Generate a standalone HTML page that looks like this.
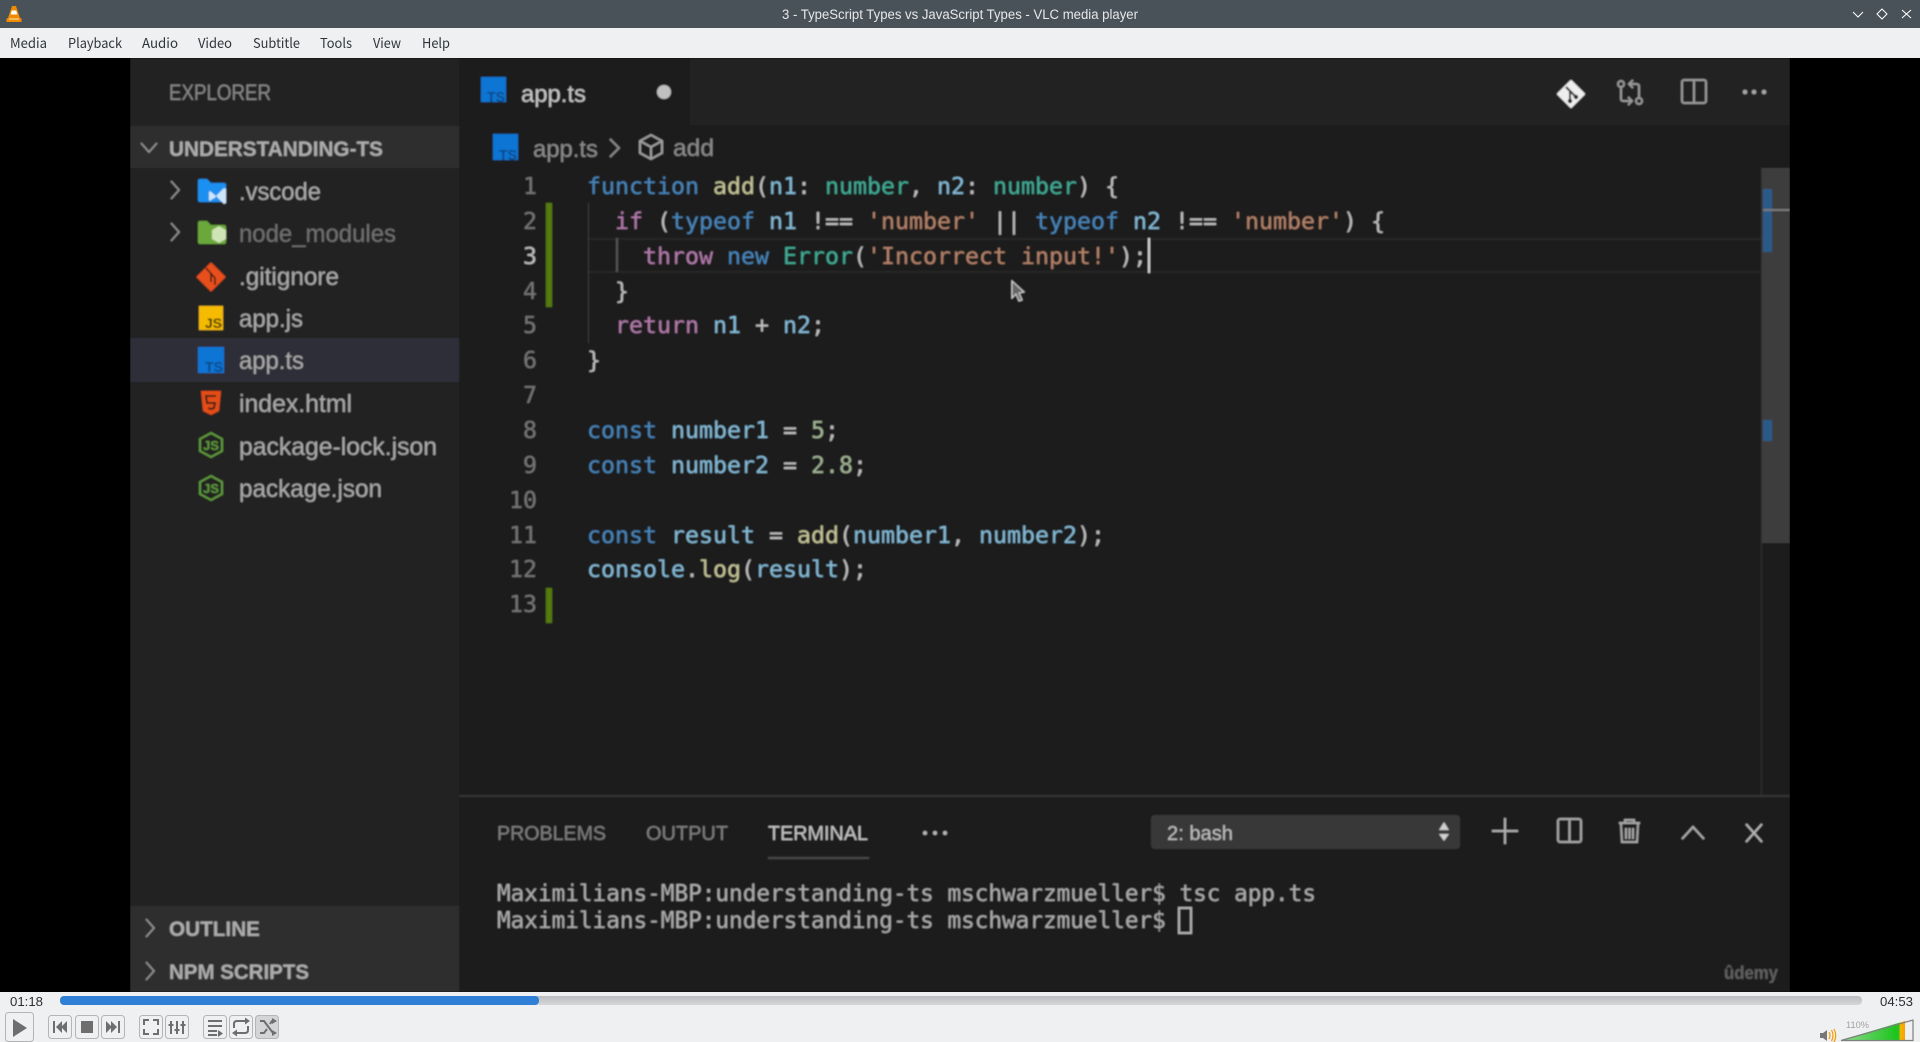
<!DOCTYPE html>
<html><head><meta charset="utf-8"><title>3 - TypeScript Types vs JavaScript Types - VLC media player</title>
<style>
html,body{margin:0;padding:0;background:#000;width:1920px;height:1042px;overflow:hidden}
svg{display:block}
text{font-family:"Liberation Sans",sans-serif}
.m{font-family:"DejaVu Sans Mono","Liberation Mono",monospace;font-size:23.25px}
.t{font-family:"DejaVu Sans Mono","Liberation Mono",monospace;font-size:22.68px;fill:#adadad}
.ln{fill:#767676;text-anchor:end}
.p{fill:#c0c0c0}.k{fill:#4a86ba}.c{fill:#b27cab}.f{fill:#c6c69a}.v{fill:#86bcd8}.y{fill:#42ad97}.s{fill:#b5836b}.n{fill:#a2b596}
.fn{font-size:24.7px;fill:#ababab}
.h{font-size:21px;font-weight:bold;fill:#adadad}
.menu{font-family:"Noto Sans CJK SC","Liberation Sans",sans-serif;font-size:13.5px;fill:#2f3338}
.btn{fill:#eff0f1;stroke:#b4b5b7;stroke-width:1}
.ic{fill:#6e6e6e}
.is{fill:none;stroke:#6e6e6e;stroke-width:2}
.g{fill:none;stroke:#969696;stroke-width:1.6}
</style></head><body>
<svg width="1920" height="1042" viewBox="0 0 1920 1042" xmlns="http://www.w3.org/2000/svg">
<defs>
<filter id="b" x="0" y="0" width="100%" height="100%"><feGaussianBlur stdDeviation="0.8"/></filter>
<linearGradient id="vol" x1="0" x2="1" y1="0" y2="0"><stop offset="0" stop-color="#8fdc8f"/><stop offset=".85" stop-color="#1fc41f"/><stop offset=".9" stop-color="#1fc41f"/><stop offset=".93" stop-color="#f7b500"/><stop offset="1" stop-color="#f7a000"/></linearGradient>
<linearGradient id="sl" x1="0" x2="0" y1="0" y2="1"><stop offset="0" stop-color="#bcbdc0"/><stop offset="1" stop-color="#d6d7d9"/></linearGradient>
</defs>
<!-- title bar -->
<rect width="1920" height="28" fill="#4a5259"/>
<path d="M14 6 L16 6 L20 18 L21.500 18.500 L21.500 22 L6.500 22 L6.500 18.500 L8 18 L12 6 Z" fill="#f08a00"/>
<path d="M11.800 10.500 h4.400 l1.200 4 h-6.800 z" fill="#fff"/>
<path d="M9 18.500 h10 v1 h-10 z" fill="#ffe2b0"/>
<text x="782" y="19" font-size="13.500" fill="#e6e8ea" textLength="356" lengthAdjust="spacingAndGlyphs">3 - TypeScript Types vs JavaScript Types - VLC media player</text>
<path d="M1853 12 L1858 17 L1863 12" fill="none" stroke="#fff" stroke-width="1"/>
<path d="M1882 9 L1887 14 L1882 19 L1877 14 Z" fill="none" stroke="#fff" stroke-width="1"/>
<path d="M1902 10 L1911 18 M1911 10 L1902 18" fill="none" stroke="#fff" stroke-width="1"/>
<!-- menu -->
<rect y="28" width="1920" height="30" fill="#eff0f1"/>
<text class="menu" x="10" y="48" textLength="37" lengthAdjust="spacingAndGlyphs">Media</text>
<text class="menu" x="68" y="48" textLength="54" lengthAdjust="spacingAndGlyphs">Playback</text>
<text class="menu" x="142" y="48" textLength="36" lengthAdjust="spacingAndGlyphs">Audio</text>
<text class="menu" x="198" y="48" textLength="34" lengthAdjust="spacingAndGlyphs">Video</text>
<text class="menu" x="253" y="48" textLength="47" lengthAdjust="spacingAndGlyphs">Subtitle</text>
<text class="menu" x="320" y="48" textLength="32" lengthAdjust="spacingAndGlyphs">Tools</text>
<text class="menu" x="373" y="48" textLength="28" lengthAdjust="spacingAndGlyphs">View</text>
<text class="menu" x="422" y="48" textLength="28" lengthAdjust="spacingAndGlyphs">Help</text>
<!-- video -->
<rect y="58" width="1920" height="934" fill="#000"/>
<g filter="url(#b)">
<rect x="130" y="58" width="1660" height="934" fill="#1c1c1c"/>
<!-- sidebar -->
<rect x="130" y="58" width="329" height="934" fill="#222222"/>
<rect x="130" y="126" width="329" height="42" fill="#2e2e2e"/>
<rect x="130" y="338" width="329" height="44" fill="#2f2f38"/>
<rect x="130" y="906" width="329" height="86" fill="#2d2d2d"/>
<text x="169" y="100" font-size="22" fill="#888888" textLength="102" lengthAdjust="spacingAndGlyphs">EXPLORER</text>
<path d="M141 143 L149 152 L157 143" class="g"/>
<text class="h" x="169" y="156" textLength="214" lengthAdjust="spacingAndGlyphs">UNDERSTANDING-TS</text>
<path d="M171 181 L179 190 L171 199" class="g"/>
<path d="M171 223 L179 232 L171 241" class="g"/>
<!-- folder vscode -->
<path d="M198 181 a2 2 0 0 1 2-2 h7 l4 4 h13 a2 2 0 0 1 2 2 v15 a2 2 0 0 1-2 2 h-24 a2 2 0 0 1-2-2 z" fill="#1e90f0"/>
<path d="M210 191 l6 5 l8-8 l2 1 v14 l-2 1 l-8-8 l-6 5 l-1-1 v-8 z M213 195 l3 2 l-3 2 z" fill="#cde6fb"/>
<!-- folder node -->
<path d="M198 223 a2 2 0 0 1 2-2 h7 l4 4 h13 a2 2 0 0 1 2 2 v15 a2 2 0 0 1-2 2 h-24 a2 2 0 0 1-2-2 z" fill="#6aa83a"/>
<path d="M219 226 l7 4 v9 l-7 4 l-7-4 v-9 z" fill="#cfe4b4"/>
<text class="fn" x="239" y="200" textLength="82" lengthAdjust="spacingAndGlyphs">.vscode</text>
<text class="fn" x="239" y="242" style="fill:#717171" textLength="157" lengthAdjust="spacingAndGlyphs">node_modules</text>
<!-- gitignore -->
<path d="M211 263 L225 277 L211 291 L197 277 Z" fill="#e8501c" stroke="#e8501c" stroke-width="1" stroke-linejoin="round"/>
<path d="M206 268 L215 278 V285 M211 273 V282" fill="none" stroke="#2a1a14" stroke-width="1.500"/>
<text class="fn" x="239" y="285" textLength="100" lengthAdjust="spacingAndGlyphs">.gitignore</text>
<!-- js -->
<rect x="199" y="306" width="24" height="24" fill="#f5bb00"/>
<text x="205" y="328" font-size="14" font-weight="bold" fill="#3a3000" textLength="17" lengthAdjust="spacingAndGlyphs">JS</text>
<text class="fn" x="239" y="327" textLength="64" lengthAdjust="spacingAndGlyphs">app.js</text>
<!-- ts -->
<rect x="198" y="347" width="26" height="26" fill="#0a74d4"/>
<text x="205" y="372" font-size="15" font-weight="bold" fill="#0c4a86" textLength="18" lengthAdjust="spacingAndGlyphs">TS</text>
<text class="fn" x="239" y="369" textLength="65" lengthAdjust="spacingAndGlyphs">app.ts</text>
<!-- html -->
<path d="M201 391 H221 L219 411 L211 415 L203 411 Z" fill="#e44d12"/>
<path d="M216 396 H206 L207 403 H215 L214 408 L211 409 L208 408" fill="none" stroke="#2a1a14" stroke-width="1.800"/>
<text class="fn" x="239" y="412" textLength="113" lengthAdjust="spacingAndGlyphs">index.html</text>
<!-- node json -->
<path d="M211 433 L222 439 V451 L211 457 L200 451 V439 Z" fill="none" stroke="#5f9a3c" stroke-width="2"/>
<text x="203" y="450" font-size="13" font-weight="bold" fill="#5f9a3c" textLength="16" lengthAdjust="spacingAndGlyphs">JS</text>
<text class="fn" x="239" y="455" textLength="198" lengthAdjust="spacingAndGlyphs">package-lock.json</text>
<path d="M211 476 L222 482 V494 L211 500 L200 494 V482 Z" fill="none" stroke="#5f9a3c" stroke-width="2"/>
<text x="203" y="493" font-size="13" font-weight="bold" fill="#5f9a3c" textLength="16" lengthAdjust="spacingAndGlyphs">JS</text>
<text class="fn" x="239" y="497" textLength="143" lengthAdjust="spacingAndGlyphs">package.json</text>
<path d="M146 919 L154 928 L146 937" class="g"/>
<text class="h" x="169" y="936" textLength="91" lengthAdjust="spacingAndGlyphs">OUTLINE</text>
<path d="M146 962 L154 971 L146 980" class="g"/>
<text class="h" x="169" y="979" textLength="140" lengthAdjust="spacingAndGlyphs">NPM SCRIPTS</text>
<!-- tab bar -->
<rect x="459" y="58" width="1331" height="67" fill="#222222"/>
<rect x="459" y="58" width="231" height="67" fill="#1c1c1c"/>
<rect x="481" y="77" width="25" height="25" fill="#0a74d4"/>
<text x="487" y="102" font-size="15" font-weight="bold" fill="#0c4a86" textLength="18" lengthAdjust="spacingAndGlyphs">TS</text>
<text x="521" y="102" font-size="24" fill="#c8c8c8" textLength="65" lengthAdjust="spacingAndGlyphs">app.ts</text>
<circle cx="664" cy="92" r="7" fill="#c0c0c0"/>
<!-- header icons -->
<path d="M1571 81 L1584 94 L1571 107 L1558 94 Z" fill="#eeeeee" stroke="#eeeeee" stroke-width="2" stroke-linejoin="round"/>
<path d="M1566 87 L1576 97 M1570 91 L1570 101" stroke="#222" stroke-width="2" fill="none"/>
<circle cx="1570" cy="101" r="2.200" fill="#222"/><circle cx="1576" cy="97" r="2.200" fill="#222"/>
<circle cx="1621" cy="84" r="3" fill="none" stroke="#9a9a9a" stroke-width="2"/>
<circle cx="1639" cy="101" r="3" fill="none" stroke="#9a9a9a" stroke-width="2"/>
<path d="M1621 87 V99 Q1621 101 1624 101 H1632 M1628 97 L1632 101 L1628 105 M1639 98 V86 Q1639 84 1636 84 H1629 M1633 80 L1629 84 L1633 88" fill="none" stroke="#9a9a9a" stroke-width="2"/>
<rect x="1682" y="80" width="24" height="23" rx="2" fill="none" stroke="#9a9a9a" stroke-width="2"/>
<path d="M1694 80 V103" stroke="#9a9a9a" stroke-width="2"/>
<circle cx="1745" cy="92" r="2.300" fill="#a8a8a8"/><circle cx="1754" cy="92" r="2.300" fill="#a8a8a8"/><circle cx="1764" cy="92" r="2.300" fill="#a8a8a8"/>
<!-- breadcrumb -->
<rect x="493" y="134" width="25" height="26" fill="#0a74d4"/>
<text x="499" y="160" font-size="15" font-weight="bold" fill="#0c4a86" textLength="18" lengthAdjust="spacingAndGlyphs">TS</text>
<text x="533" y="157" font-size="24" fill="#8c8c8c" textLength="65" lengthAdjust="spacingAndGlyphs">app.ts</text>
<path d="M610 139 L619 148 L610 157" fill="none" stroke="#8a8a8a" stroke-width="2"/>
<path d="M651 135 L662 141 V153 L651 159 L640 153 V141 Z M640 141 L651 147 L662 141 M651 147 V159" fill="none" stroke="#a0a0a0" stroke-width="2"/>
<text x="673" y="156" font-size="24" fill="#8c8c8c" textLength="41" lengthAdjust="spacingAndGlyphs">add</text>
<!-- editor -->
<rect x="588" y="238" width="1174" height="2" fill="#262626"/>
<rect x="588" y="271" width="1174" height="2" fill="#262626"/>
<rect x="588" y="203" width="1" height="140" fill="#3c3c3c"/>
<rect x="616" y="238" width="2" height="34" fill="#555"/>
<rect x="546" y="203" width="6" height="104" fill="#567a0e"/>
<rect x="546" y="588" width="6" height="35" fill="#567a0e"/>
<rect x="1148" y="238" width="2" height="35" fill="#d8d8d8"/>
<g class="m">
<text class="m ln" x="537" y="194">1</text>
<text class="m ln" x="537" y="229">2</text>
<text class="m ln" x="537" y="264" style="fill:#c0c0c0">3</text>
<text class="m ln" x="537" y="299">4</text>
<text class="m ln" x="537" y="333">5</text>
<text class="m ln" x="537" y="368">6</text>
<text class="m ln" x="537" y="403">7</text>
<text class="m ln" x="537" y="438">8</text>
<text class="m ln" x="537" y="473">9</text>
<text class="m ln" x="537" y="508">10</text>
<text class="m ln" x="537" y="543">11</text>
<text class="m ln" x="537" y="577">12</text>
<text class="m ln" x="537" y="612">13</text>
<text class="m p" x="587" y="194"><tspan class="k">function</tspan> <tspan class="f">add</tspan>(<tspan class="v">n1</tspan>: <tspan class="y">number</tspan>, <tspan class="v">n2</tspan>: <tspan class="y">number</tspan>) {</text>
<text class="m p" x="615" y="229"><tspan class="c">if</tspan> (<tspan class="k">typeof</tspan> <tspan class="v">n1</tspan> !== <tspan class="s">'number'</tspan> || <tspan class="k">typeof</tspan> <tspan class="v">n2</tspan> !== <tspan class="s">'number'</tspan>) {</text>
<text class="m p" x="643" y="264"><tspan class="c">throw</tspan> <tspan class="k">new</tspan> <tspan class="y">Error</tspan>(<tspan class="s">'Incorrect input!'</tspan>);</text>
<text class="m p" x="615" y="299">}</text>
<text class="m p" x="615" y="333"><tspan class="c">return</tspan> <tspan class="v">n1</tspan> + <tspan class="v">n2</tspan>;</text>
<text class="m p" x="587" y="368">}</text>
<text class="m p" x="587" y="438"><tspan class="k">const</tspan> <tspan class="v">number1</tspan> = <tspan class="n">5</tspan>;</text>
<text class="m p" x="587" y="473"><tspan class="k">const</tspan> <tspan class="v">number2</tspan> = <tspan class="n">2.8</tspan>;</text>
<text class="m p" x="587" y="543"><tspan class="k">const</tspan> <tspan class="v">result</tspan> = <tspan class="f">add</tspan>(<tspan class="v">number1</tspan>, <tspan class="v">number2</tspan>);</text>
<text class="m p" x="587" y="577"><tspan class="v">console</tspan>.<tspan class="f">log</tspan>(<tspan class="v">result</tspan>);</text>
</g>
<path d="M1012 281 V298 L1016 294 L1019 301 L1022 300 L1019 293 L1024 292 Z" fill="#666" stroke="#d8d8d8" stroke-width="1"/>
<!-- scrollbar -->
<rect x="1761" y="168" width="1" height="628" fill="#333"/>
<rect x="1762" y="168" width="28" height="375" fill="#3d3d3d"/>
<rect x="1763" y="189" width="9" height="63" fill="#2c5a88"/>
<rect x="1763" y="209" width="27" height="2" fill="#7a7a7a"/>
<rect x="1763" y="420" width="9" height="21" fill="#2c5a88"/>
<!-- panel -->
<rect x="459" y="795" width="1331" height="2" fill="#343434"/>
<text x="497" y="840" font-size="20" fill="#808080" textLength="109" lengthAdjust="spacingAndGlyphs">PROBLEMS</text>
<text x="646" y="840" font-size="20" fill="#808080" textLength="82" lengthAdjust="spacingAndGlyphs">OUTPUT</text>
<text x="768" y="840" font-size="20" fill="#c8c8c8" textLength="100" lengthAdjust="spacingAndGlyphs">TERMINAL</text>
<rect x="768" y="857" width="101" height="2" fill="#4a4a4a"/>
<circle cx="925" cy="833" r="2" fill="#b8b8b8"/><circle cx="935" cy="833" r="2" fill="#b8b8b8"/><circle cx="945" cy="833" r="2" fill="#b8b8b8"/>
<rect x="1151" y="815" width="309" height="34" rx="4" fill="#383838"/>
<text x="1167" y="840" font-size="20" fill="#c0c0c0" textLength="66" lengthAdjust="spacingAndGlyphs">2: bash</text>
<path d="M1444 822 L1449 830 H1439 Z M1444 841 L1449 834 H1439 Z" fill="#d0d0d0"/>
<path d="M1492 831 H1518 M1505 818 V844" stroke="#b0b0b0" stroke-width="2" fill="none"/>
<rect x="1558" y="819" width="23" height="23" rx="2" fill="none" stroke="#a8a8a8" stroke-width="2"/>
<path d="M1569.500 819 V842" stroke="#a8a8a8" stroke-width="2"/>
<path d="M1619 823 H1640 M1625 823 V820 H1634 V823 M1621 824 L1622 842 H1637 L1638 824 M1626 828 V839 M1629.500 828 V839 M1633 828 V839" fill="none" stroke="#a8a8a8" stroke-width="2"/>
<path d="M1682 839 L1693 827 L1704 839" fill="none" stroke="#b0b0b0" stroke-width="2"/>
<path d="M1746 824 L1762 842 M1762 824 L1746 842" fill="none" stroke="#b8b8b8" stroke-width="2"/>
<text class="t" x="497" y="901">Maximilians-MBP:understanding-ts mschwarzmueller$ tsc app.ts</text>
<text class="t" x="497" y="928">Maximilians-MBP:understanding-ts mschwarzmueller$</text>
<rect x="1179" y="908" width="12" height="25" fill="none" stroke="#b4b4b4" stroke-width="2"/>
<text x="1724" y="979" font-size="18" font-weight="bold" fill="#606060" textLength="54" lengthAdjust="spacingAndGlyphs">ûdemy</text>
</g>
<!-- controls -->
<rect y="992" width="1920" height="50" fill="#eff0f1"/>
<text x="10" y="1006" font-size="13" fill="#2a2e32" textLength="33" lengthAdjust="spacingAndGlyphs">01:18</text>
<text x="1880" y="1006" font-size="13" fill="#2a2e32" textLength="33" lengthAdjust="spacingAndGlyphs">04:53</text>
<rect x="60" y="996" width="1802" height="9" rx="4" fill="url(#sl)"/>
<rect x="60" y="996" width="479" height="9" rx="4" fill="#2f7fd6"/>
<rect class="btn" x="5.500" y="1012.500" width="28" height="29" rx="3"/>
<path d="M13 1019 L27 1028 L13 1037 Z" class="ic"/>
<rect class="btn" x="48.500" y="1015.500" width="23" height="23" rx="3"/>
<path d="M53 1021 h2 v12 h-2 z M56 1027 l6-6 v12 z M61 1027 l6-6 v12 z" class="ic"/>
<rect class="btn" x="75.500" y="1015.500" width="23" height="23" rx="3"/>
<rect x="81" y="1021" width="12" height="12" class="ic"/>
<rect class="btn" x="101.500" y="1015.500" width="23" height="23" rx="3"/>
<path d="M106 1021 l6 6 l-6 6 z M111 1021 l6 6 l-6 6 z M118 1021 h2 v12 h-2 z" class="ic"/>
<rect class="btn" x="139.500" y="1015.500" width="23" height="23" rx="3"/>
<path d="M144 1025 v-5 h5 M153 1020 h5 v5 M158 1029 v5 h-5 M149 1034 h-5 v-5" class="is"/>
<rect class="btn" x="165.500" y="1015.500" width="23" height="23" rx="3"/>
<path d="M171 1021 v13 M177 1021 v13 M183 1021 v13" class="is"/>
<path d="M168.500 1024 h5 v2 h-5 z M174.500 1029 h5 v2 h-5 z M180.500 1024 h5 v2 h-5 z" class="ic"/>
<rect class="btn" x="203.500" y="1015.500" width="23" height="23" rx="3"/>
<path d="M208 1021 h14 M208 1026 h14 M208 1031 h9 M208 1035 h9" class="is"/>
<path d="M218 1030 l5 3.500 l-5 3.500 z" class="ic"/>
<rect class="btn" x="229.500" y="1015.500" width="23" height="23" rx="3"/>
<path d="M234 1028 v-4 q0-3 3-3 h11 M248 1026 v4 q0 3-3 3 h-11" class="is"/>
<path d="M245 1017.500 l5 3.500 l-5 3.500 z M237 1029.500 l-5 3.500 l5 3.500 z" class="ic"/>
<rect x="255.500" y="1015.500" width="23" height="23" rx="3" fill="#d4d5d7" stroke="#b4b5b7"/>
<path d="M260 1021 h4 l9 12 h2 M260 1033 h4 l3-4 M270 1024 l2-3 h3" class="is"/>
<path d="M272 1018 l5 3 l-5 3 z M272 1030 l5 3 l-5 3 z" class="ic"/>
<path d="M1820 1033 h3 l4-3 v11 l-4-3 h-3 z" fill="#777"/>
<path d="M1829 1032 q2 3.500 0 7 M1831.500 1030 q3 5.500 0 11 M1834 1029 q3.500 6.500 0 13" fill="none" stroke="#f59a00" stroke-width="1.200"/>
<path d="M1841 1040 L1905 1021 V1040 Z" fill="url(#vol)"/>
<path d="M1841 1040.500 L1913 1020 V1040.500 Z" fill="none" stroke="#7f7f7f" stroke-width="1.200"/>
<text x="1846" y="1028" font-size="9.500" fill="#a0a0a0" textLength="23" lengthAdjust="spacingAndGlyphs">110%</text>
</svg>
</body></html>
